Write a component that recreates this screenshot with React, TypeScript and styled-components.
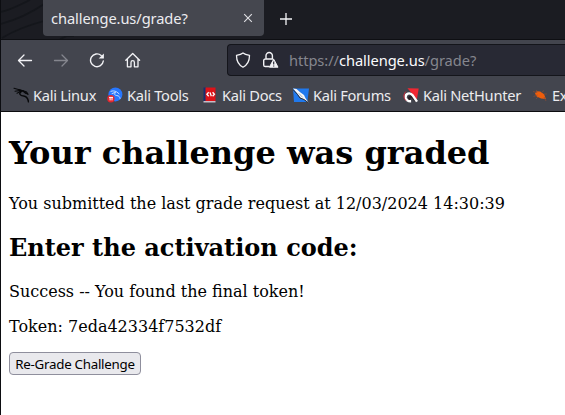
import React from 'react';
import styled, { createGlobalStyle } from 'styled-components';

const GlobalStyle = createGlobalStyle`
  * { box-sizing: border-box; }
  body { margin: 0; overflow: hidden; background: #fff; }
`;

const Window = styled.div`
  width: 565px;
  height: 415px;
  overflow: hidden;
  display: flex;
  flex-direction: column;
  border-left: 1px solid #0c0d11;
  background: #fff;
  font-family: 'Noto Sans', sans-serif;
`;

const TabStrip = styled.div`
  position: relative;
  height: 40px;
  flex: none;
  display: flex;
  padding-left: 42px;
  background: #1b1c22;
  border-bottom: 1px solid #0e0f13;
`;

const StripArt = styled.svg`
  position: absolute;
  left: 0;
  top: 0;
`;

const Tab = styled.div`
  position: relative;
  width: 221px;
  height: 36px;
  padding: 0 9px 0 8px;
  display: flex;
  align-items: center;
  justify-content: space-between;
  border-radius: 0 0 4px 4px;
  background: #45474f;
  color: #ececef;
`;

const TabTitle = styled.span`
  font-size: 14.67px;
  line-height: 20px;
  letter-spacing: -0.1px;
  white-space: nowrap;
`;

const NewTab = styled.div`
  position: relative;
  width: 43px;
  height: 38px;
  display: flex;
  align-items: center;
  justify-content: center;
`;

const Toolbar = styled.div`
  height: 40px;
  flex: none;
  display: flex;
  align-items: center;
  background: #43454e;
  padding-left: 16px;
`;

const NavButtons = styled.div`
  width: 210px;
  display: flex;
  gap: 20px;
`;

const AddressBar = styled.div`
  flex: 1;
  height: 32px;
  display: flex;
  align-items: center;
  padding-left: 7px;
  border: 1px solid #14151b;
  border-right: 0;
  border-radius: 4px 0 0 4px;
  background: #282934;
`;

const IconSlot = styled.div`
  display: flex;
  width: 27px;
`;

const Url = styled.span<{ $strong?: boolean }>`
  font-size: 14.67px;
  line-height: 20px;
  letter-spacing: -0.07px;
  white-space: nowrap;
  color: ${(p) => (p.$strong ? '#fbfbfe' : '#85868e')};
`;

const Bookmarks = styled.div`
  height: 32px;
  flex: none;
  display: flex;
  align-items: center;
  padding: 0 0 1px 12px;
  background: #43454e;
  border-bottom: 1px solid #0c0c0f;
`;

const Bookmark = styled.div<{ $width: number }>`
  width: ${(p) => p.$width}px;
  flex: none;
  display: flex;
  align-items: center;
  gap: 4px;
  color: #ececef;
  font-size: 14.67px;
  line-height: 20px;
  letter-spacing: -0.29px;
  white-space: nowrap;

  svg { flex: none; }
`;

const Page = styled.main`
  flex: 1;
  padding: 0 8px;
  color: #000;
  font-family: 'DejaVu Serif', serif;
  font-size: 16px;
  line-height: 19px;
`;

const Title = styled.h1`
  margin: 22px 0 0;
  font-size: 32px;
  line-height: 38px;
  white-space: nowrap;
`;

const Heading = styled.h2`
  margin: 21px 0 0;
  font-size: 24px;
  line-height: 28px;
`;

const Text = styled.p<{ $top: number }>`
  margin: ${(p) => p.$top}px 0 0;
  white-space: nowrap;
`;

const Button = styled.button`
  display: block;
  margin: 16px 0 0;
  width: 132px;
  height: 23px;
  padding: 0;
  border: 1px solid #8f8f9d;
  border-radius: 4px;
  background: #e9e9ed;
  color: #000;
  font: 13.33px/22px 'Noto Sans', sans-serif;
  letter-spacing: -0.27px;
  white-space: nowrap;
`;

const Line = ({ d, color = '#f3f3f6' }: { d: string; color?: string }) => (
  <svg width="16" height="16" viewBox="0 0 16 16" fill="none" stroke={color} strokeWidth="1.3" strokeLinecap="round" strokeLinejoin="round">
    <path d={d} />
  </svg>
);

const ReloadIcon = () => (
  <svg width="16" height="16" viewBox="0 0 16 16" fill="none" stroke="#f3f3f6" strokeWidth="1.4" strokeLinecap="round">
    <path d="M12.2 3.5A6.4 6.4 0 1 0 14.3 9" />
    <path d="M14.9 1.4v5.2H9.7z" fill="#f3f3f6" stroke="none" />
  </svg>
);

const LockIcon = () => (
  <svg width="18" height="18" viewBox="0 0 18 18" fill="none">
    <path d="M4 8V4.7a3.2 3.2 0 0 1 6.4 0V8M7 15.5H3.3a1.6 1.6 0 0 1-1.6-1.6V9.6A1.6 1.6 0 0 1 3.3 8h7.5" stroke="#f3f3f6" strokeWidth="1.4" strokeLinecap="round" />
    <path d="M11.7 8.2 16 16.2H7.4z" fill="#f3f3f6" stroke="#f3f3f6" strokeLinejoin="round" />
    <path d="M11.7 10.6v2.8M11.7 14.6v1" stroke="#282934" strokeWidth="1.2" />
  </svg>
);

const DragonIcon = () => (
  <svg width="16" height="18" viewBox="0 0 16 18" fill="none" stroke="#08090b" strokeLinecap="round">
    <path d="M1 2.2 8 4.2M2 5.2 7.8 4.4M4 7.2 9 4.8" strokeWidth="1.1" />
    <path d="M6 3.9 10 5 12.4 7M9 5.2C5 7.2 7 9.8 10.6 9.9c2.7.1 4.2 1.6 4.9 5.9" strokeWidth="1.5" />
    <path d="m9.5 4.5 4 1.5 1.6 2.3M12.6 7l2.2 1.4" strokeWidth="1.1" />
  </svg>
);

const ToolsIcon = () => (
  <svg width="16" height="18" viewBox="0 0 16 18" fill="none">
    <circle cx="8.4" cy="8.4" r="7" fill="#2777ff" />
    <path d="M3.6 5.5c2-1 4-.6 6 .3l2.8 2.3M4.7 7.7l4.1-1.5M8.7 6.5C6.5 8.2 8 9.4 10 9.6c2 .2 2.9 1.4 3.1 3.2" stroke="#c7dcff" strokeWidth="1" />
    <circle cx="3.9" cy="12.7" r="3.7" fill="#e3262e" />
    <path d="M2 11.4h4M3.1 11.4v3M5 11.4v3" stroke="#fff" strokeWidth="1" />
  </svg>
);

const DocsIcon = () => (
  <svg width="16" height="18" viewBox="0 0 16 18" fill="none">
    <path d="M1.5 1.5h2.5V15H1.5z" fill="#172f70" />
    <path d="M3.5 1.5h10V15h-10z" fill="#dd1218" />
    <path d="M1.5 15h12v1.5h-12z" fill="#c9bdc6" />
    <path d="M6.7 6.3 4.9 8.3l1.8 1.9M10.6 6.3l1.8 2-1.8 1.9M8 6.4l1.3 3.8" stroke="#fff" strokeWidth="1.3" />
  </svg>
);

const ForumsIcon = () => (
  <svg width="16" height="18" viewBox="0 0 16 18">
    <path d="M0 2.5h16L14.3 16H1z" fill="#2079ed" />
    <path d="m0 2.5 3.5.5 4 3.5 3.5 2.5 1.5 3.2 3 4.2-4.5-3-3.5-1.7L4.7 8z" fill="#f6f7f8" />
    <path d="M0 3.5 4.4 8.3 7 12l4 1.5 4 3" fill="none" stroke="#292b32" strokeWidth="1" />
    <path d="m5.8 7.3 3.7 4" stroke="#888e96" strokeWidth=".7" />
  </svg>
);

const NetHunterIcon = () => (
  <svg width="16" height="18" viewBox="0 0 16 18" fill="none">
    <path d="m4.5 2.3 11.2.2-1.8 11z" fill="#f12732" />
    <path d="M13 15 9.6 11.4C7.6 9.6 4.8 12 7 13.8" stroke="#2a2025" strokeWidth="2.4" />
    <path d="M14 15.6 9.9 9.6C6.8 5.6 2.2 7.7 2.7 11.4c.5 2.5 2.6 3.9 5.4 3.8" stroke="#fff" strokeWidth="2.4" />
    <path d="M2.8 5.6C.3 8.3.2 12.2 3 14.5" stroke="#d32a3b" strokeWidth="1" />
  </svg>
);

const ExploitIcon = () => (
  <svg width="16" height="18" viewBox="0 0 16 18" fill="none">
    <path d="m3 7.5 1.6-2.3 3.6.2 3.9 2.8 1.8 4.7-4.8-.4-4.4-2.1z" fill="#ee5d0b" />
    <path d="m1 5.5 4 1L4.5 4M1.5 10.5l4-1.5M6 11l-2 2M9.5 6.5 12 4.5M11.8 8h3M12 11l2 4" stroke="#8c4c32" strokeWidth=".7" />
  </svg>
);

const bookmarks = [
  { label: 'Kali Linux', width: 94, icon: <DragonIcon /> },
  { label: 'Kali Tools', width: 95, icon: <ToolsIcon /> },
  { label: 'Kali Docs', width: 91, icon: <DocsIcon /> },
  { label: 'Kali Forums', width: 110, icon: <ForumsIcon /> },
  { label: 'Kali NetHunter', width: 129, icon: <NetHunterIcon /> },
  { label: 'Ex', width: 33, icon: <ExploitIcon /> },
];

export default function App() {
  return (
    <Window>
      <GlobalStyle />
      <TabStrip>
        <StripArt width="80" height="39" fill="none" stroke="#14161b" strokeWidth="1.8">
          <path d="M0 12C12 9 20 4 29 0M0 24C18 19 30 13 43 4M1 38C14 30 28 25 43 21M59 39l7-3h7" />
        </StripArt>
        <Tab>
          <TabTitle>challenge.us/grade?</TabTitle>
          <svg width="14" height="14" viewBox="0 0 14 14" stroke="#e0e0e4" strokeWidth="1.1">
            <path d="m3.2 3.2 7.6 7.6m0-7.6-7.6 7.6" />
          </svg>
        </Tab>
        <NewTab>
          <svg width="14" height="14" viewBox="0 0 14 14" stroke="#f5f5f7" strokeWidth="1.3">
            <path d="M7 1v12M1 7h12" />
          </svg>
        </NewTab>
      </TabStrip>
      <Toolbar>
        <NavButtons>
          <Line d="M14.5 8.5H2M7 3 1.5 8.5 7 14" />
          <Line d="M1.5 8.5h13M9 3l5.5 5.5L9 14" color="#85868e" />
          <ReloadIcon />
          <Line d="M.8 8.2 7.7 1.5l6.9 6.7M2.4 7v7.8H6v-4.4a1.7 1.7 0 0 1 3.4 0v4.4H13V7" />
        </NavButtons>
        <AddressBar>
          <IconSlot>
            <Line d="M8 1C6.5 2.3 4 3 1.5 3.4 1.5 9 4 13 8 15.2 12 13 14.5 9 14.5 3.4 12 3 9.5 2.3 8 1z" />
          </IconSlot>
          <IconSlot><LockIcon /></IconSlot>
          <Url>https://</Url><Url $strong>challenge.us</Url><Url>/grade?</Url>
        </AddressBar>
      </Toolbar>
      <Bookmarks>
        {bookmarks.map((b) => (
          <Bookmark key={b.label} $width={b.width}>{b.icon}{b.label}</Bookmark>
        ))}
      </Bookmarks>
      <Page>
        <Title>Your challenge was graded</Title>
        <Text $top={22}>You submitted the last grade request at 12/03/2024 14:30:39</Text>
        <Heading>Enter the activation code:</Heading>
        <Text $top={20}>Success -- You found the final token!</Text>
        <Text $top={16}>Token: 7eda42334f7532df</Text>
        <Button>Re-Grade Challenge</Button>
      </Page>
    </Window>
  );
}
